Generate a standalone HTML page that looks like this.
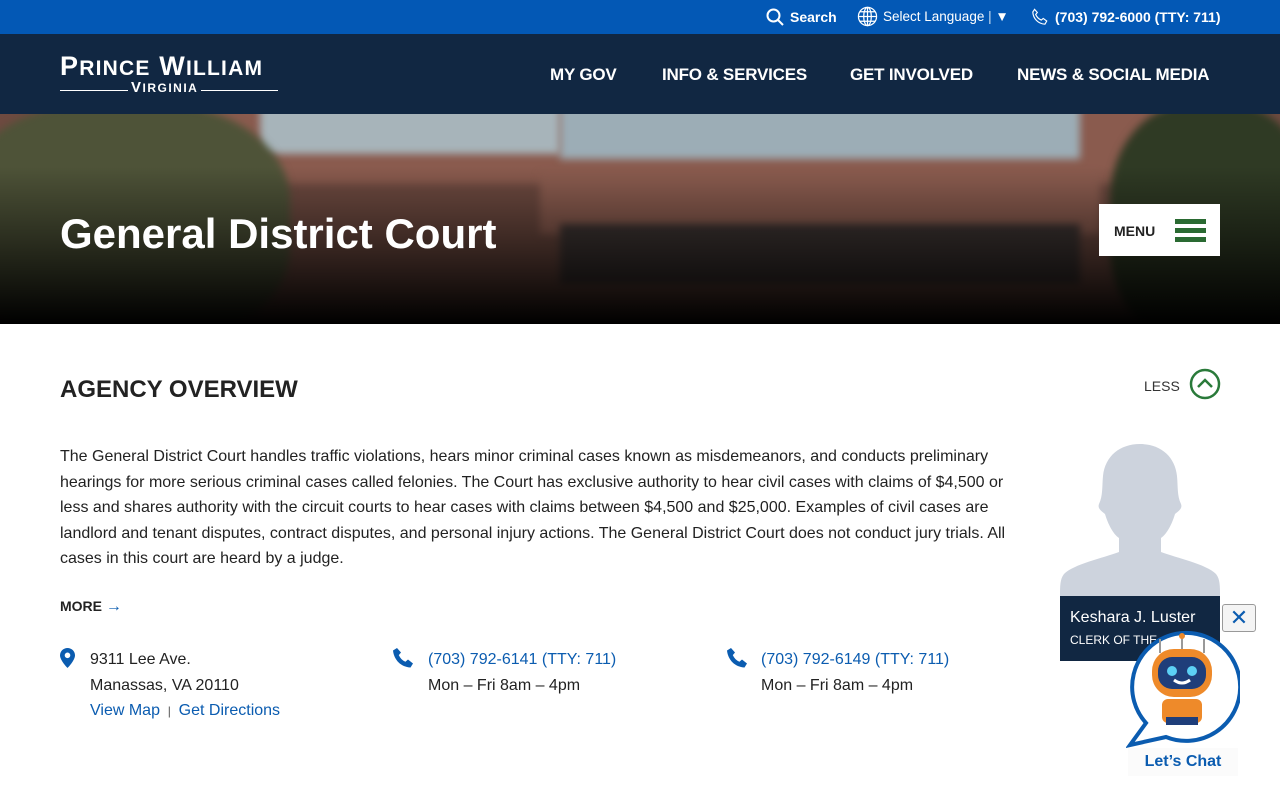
<!DOCTYPE html>
<html><head><style>
*{margin:0;padding:0;box-sizing:border-box}
body{width:1280px;height:800px;overflow:hidden;font-family:"Liberation Sans",Arial,sans-serif;background:#fff;position:relative;color:#222}
.top{height:34px;background:#0358b5;color:#fff;font-size:14px;position:relative}
.top span{position:absolute;top:9px}
.nav{height:80px;background:#112742;position:relative;color:#fff}
.logo{position:absolute;left:60px;top:18px;font-family:"Liberation Serif",serif;font-weight:bold;color:#fff}
.nav a{position:absolute;top:31px;font-weight:bold;font-size:17px;color:#fff;letter-spacing:-.2px}
.hero{height:210px;position:relative;overflow:hidden;background:#6e4a40}
.blk{position:absolute;filter:blur(4px)}
h1{position:absolute;left:60px;top:96px;font-size:42px;color:#fff;font-weight:bold}
.menu{position:absolute;left:1099px;top:90px;width:121px;height:52px;background:#fff;font-weight:bold;font-size:14px;color:#222}
.menu b{position:absolute;height:5px;width:31px;left:76px;background:#2a6a32}
h2{position:absolute;left:60px;top:376px;font-size:24px;font-weight:bold;color:#222}
p{position:absolute;left:60px;top:444px;width:970px;font-size:16px;line-height:25.5px;color:#222}
.a{color:#0b5cb0}
</style></head><body>
<div class="top">
<svg style="position:absolute;left:766px;top:8px" width="18" height="18" viewBox="0 0 18 18"><circle cx="7.5" cy="7.5" r="6" fill="none" stroke="#fff" stroke-width="2"/><path d="M12 12l5 5" stroke="#fff" stroke-width="2"/></svg>
<span style="left:790px;font-weight:bold">Search</span>
<svg style="position:absolute;left:857px;top:6px" width="21" height="21" viewBox="0 0 22 22"><g fill="none" stroke="#fff" stroke-width="1.3"><circle cx="11" cy="11" r="9.5"/><ellipse cx="11" cy="11" rx="4" ry="9.5"/><path d="M1.5 11h19M3 6h16M3 16h16M11 1.5v19"/></g></svg>
<span style="left:883px;font-size:13.5px">Select Language <span style="position:static;opacity:.8">|</span> ▼</span>
<svg style="position:absolute;left:1031px;top:8px" width="18" height="18" viewBox="0 0 20 20"><path d="M4 1.5l3 3.5-1.8 2.2c1.2 2.8 3.4 5 6.2 6.2L13.6 11.6 17.5 14.5 15.5 18C8 17.5 2.5 12 2 4.5z" fill="none" stroke="#fff" stroke-width="1.3"/></svg>
<span style="left:1055px;font-weight:bold;font-size:14px">(703) 792-6000 (TTY: 711)</span>
</div>
<div class="nav">
<div class="logo"><div style="font-size:27px;letter-spacing:1.2px;line-height:28px;font-family:'Liberation Sans',sans-serif">P<span style="font-size:21px">RINCE</span> W<span style="font-size:21px">ILLIAM</span></div>
<div style="position:relative;height:14px;width:218px"><div style="position:absolute;top:7px;left:0;width:218px;border-top:1px solid #fff"></div><div style="position:absolute;left:68px;top:-3px;background:#112742;padding:0 3px;font-size:15px;letter-spacing:1.5px;line-height:16px;font-family:'Liberation Sans',sans-serif">V<span style="font-size:12px">IRGINIA</span></div></div></div>
<a style="left:550px">MY GOV</a><a style="left:662px">INFO &amp; SERVICES</a><a style="left:850px">GET INVOLVED</a><a style="left:1017px">NEWS &amp; SOCIAL MEDIA</a>
</div>
<div class="hero">
<div class="blk" style="left:200px;top:-10px;width:1000px;height:80px;background:#8a5b4e"></div>
<div class="blk" style="left:560px;top:-10px;width:520px;height:55px;background:#9cadb6"></div>
<div class="blk" style="left:260px;top:-10px;width:300px;height:50px;background:#a7b4ba"></div>
<div class="blk" style="left:540px;top:60px;width:560px;height:60px;background:#8c5d50"></div>
<div class="blk" style="left:560px;top:110px;width:520px;height:60px;background:#3f3634"></div>
<div class="blk" style="left:-40px;top:-10px;width:330px;height:240px;background:#4e5338;border-radius:40%"></div>
<div class="blk" style="left:1110px;top:-10px;width:200px;height:240px;background:#2f3a24;border-radius:40%"></div>
<div style="position:absolute;inset:0;background:linear-gradient(180deg,rgba(0,0,0,0) 25%,rgba(0,0,0,.45) 60%,#000 100%)"></div>
<h1>General District Court</h1>
<div class="menu"><span style="position:absolute;left:15px;top:19px">MENU</span><b style="top:15px"></b><b style="top:24px"></b><b style="top:33px"></b></div>
</div>
<h2>AGENCY OVERVIEW</h2>
<span style="position:absolute;left:1144px;top:378px;font-size:14px;color:#333">LESS</span>
<svg style="position:absolute;left:1189px;top:368px" width="32" height="32" viewBox="0 0 32 32"><circle cx="16" cy="16" r="14" fill="none" stroke="#2a7a3a" stroke-width="2.5"/><path d="M9 19l7-7 7 7" fill="none" stroke="#2a7a3a" stroke-width="2.5"/></svg>
<p>The General District Court handles traffic violations, hears minor criminal cases known as misdemeanors, and conducts preliminary hearings for more serious criminal cases called felonies. The Court has exclusive authority to hear civil cases with claims of $4,500 or less and shares authority with the circuit courts to hear cases with claims between $4,500 and $25,000. Examples of civil cases are landlord and tenant disputes, contract disputes, and personal injury actions. The General District Court does not conduct jury trials. All cases in this court are heard by a judge.</p>
<span style="position:absolute;left:60px;top:598px;font-size:14px;font-weight:bold">MORE <span class="a" style="font-size:16px">→</span></span>
<svg style="position:absolute;left:60px;top:648px" width="15" height="20" viewBox="0 0 15 20"><path d="M7.5 0C3.4 0 0 3.3 0 7.4 0 12.5 7.5 20 7.5 20S15 12.5 15 7.4C15 3.3 11.6 0 7.5 0z" fill="#0b5cb0"/><circle cx="7.5" cy="7.3" r="2.8" fill="#fff"/></svg>
<div style="position:absolute;left:90px;top:647px;font-size:16px;line-height:25.5px">9311 Lee Ave.<br>Manassas, VA 20110<br><span class="a">View Map</span> <span style="font-size:12px;color:#555">&nbsp;|&nbsp;</span> <span class="a">Get Directions</span></div>
<svg style="position:absolute;left:393px;top:648px" width="20" height="20" viewBox="0 0 20 20"><path d="M4 0l4 4.5-2.2 2.6c1.4 3 3.6 5.3 6.6 6.7L15 11.5l5 4-2.5 4C8 19 1 12 0 2.5z" fill="#0b5cb0"/></svg>
<div style="position:absolute;left:428px;top:647px;font-size:16px;line-height:26px"><span class="a">(703) 792-6141 (TTY: 711)</span><br>Mon – Fri 8am – 4pm</div>
<svg style="position:absolute;left:727px;top:648px" width="20" height="20" viewBox="0 0 20 20"><path d="M4 0l4 4.5-2.2 2.6c1.4 3 3.6 5.3 6.6 6.7L15 11.5l5 4-2.5 4C8 19 1 12 0 2.5z" fill="#0b5cb0"/></svg>
<div style="position:absolute;left:761px;top:647px;font-size:16px;line-height:26px"><span class="a">(703) 792-6149 (TTY: 711)</span><br>Mon – Fri 8am – 4pm</div>
<svg style="position:absolute;left:1060px;top:440px" width="160" height="156" viewBox="0 0 160 156"><path d="M80 4c-20 0-35 12-37 32-1 10 0 20-4 28-2 5 4 8 6 10 3 10 8 20 14 24v14c-16 6-45 12-55 22-4 5-4 12-4 22h160c0-10 0-17-4-22-10-10-39-16-55-22V98c6-4 11-14 14-24 2-2 8-5 6-10-4-8-3-18-4-28C115 16 100 4 80 4z" fill="#cdd3dd"/></svg>
<div style="position:absolute;left:1060px;top:596px;width:160px;height:65px;background:#112742;color:#fff"><div style="position:absolute;left:10px;top:13px;font-size:16px">Keshara J. Luster</div><div style="position:absolute;left:10px;top:37px;font-size:12px">CLERK OF THE</div></div>
<div style="position:absolute;left:1222px;top:604px;width:34px;height:28px;border:1px solid #999;border-radius:3px;background:#f4f4f4;color:#0b5cb0;font-size:22px;text-align:center;line-height:25px">✕</div>
<svg style="position:absolute;left:1126px;top:625px" width="114" height="124" viewBox="0 0 114 124"><path d="M20 98A54 54 0 1 1 40 112L4 120z" fill="#fff" stroke="#0b5cb0" stroke-width="4"/>
<rect x="26" y="24" width="60" height="48" rx="22" fill="#ee8a2a"/><rect x="32" y="32" width="48" height="32" rx="14" fill="#1f3e7a"/><circle cx="46" cy="46" r="5" fill="#5cd0f5"/><circle cx="66" cy="46" r="5" fill="#5cd0f5"/><path d="M48 55q8 6 16 0" stroke="#fff" stroke-width="3" fill="none"/><path d="M56 24V12M34 28V14M78 28V14" stroke="#999" stroke-width="2"/><circle cx="56" cy="11" r="3" fill="#ee8a2a"/><rect x="36" y="74" width="40" height="24" rx="6" fill="#ee8a2a"/><rect x="40" y="92" width="32" height="8" fill="#1f3e7a"/></svg>
<div style="position:absolute;left:1128px;top:748px;width:110px;height:28px;background:#fbfbfb;color:#0b5cb0;font-weight:bold;font-size:16px;text-align:center;line-height:28px">Let’s Chat</div>
</body></html>
